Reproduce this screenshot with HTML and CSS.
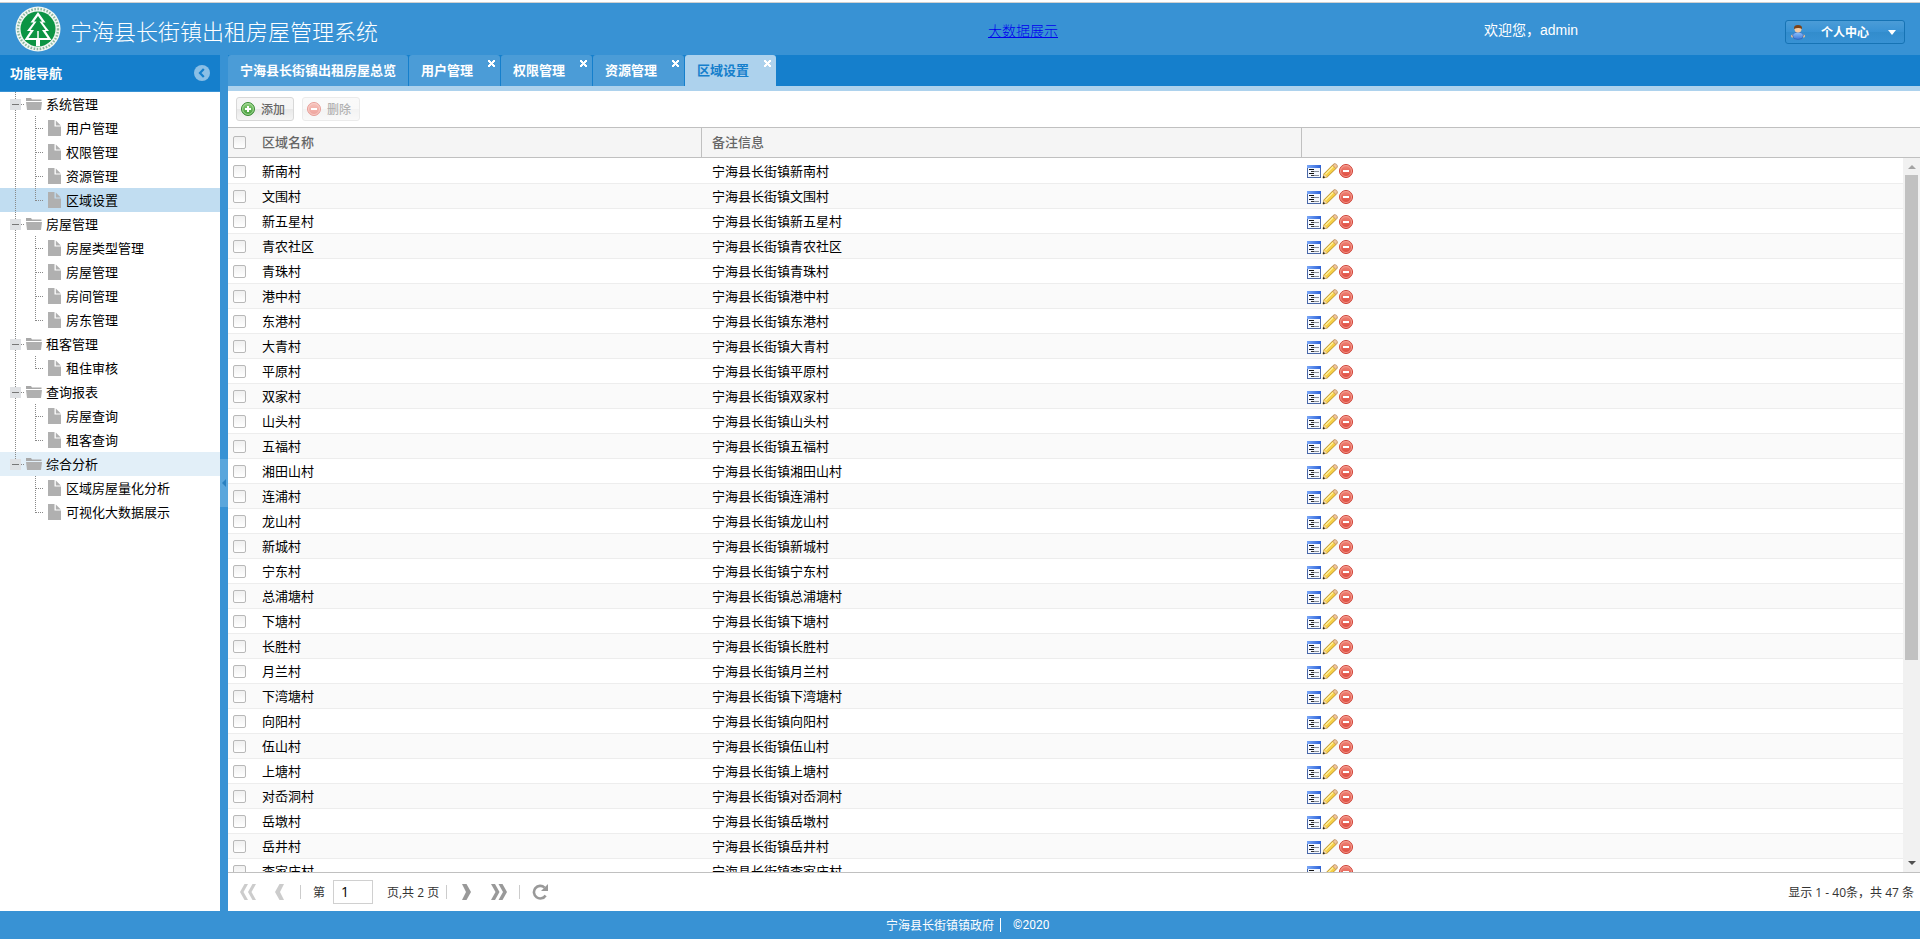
FILE: index.html
```
<!DOCTYPE html>
<html lang="zh-CN">
<head>
<meta charset="utf-8">
<title>宁海县长街镇出租房屋管理系统</title>
<link rel="stylesheet" href="styles.css">
</head>
<body>
<svg class="defs" width="0" height="0">
  <defs>
    <linearGradient id="gBlue" x1="0" y1="0" x2="1" y2="0"><stop offset="0" stop-color="#7ba8f8"/><stop offset="1" stop-color="#2c62d8"/></linearGradient>
    <linearGradient id="gRed" x1="0" y1="0" x2="0" y2="1"><stop offset="0" stop-color="#f08a7c"/><stop offset="1" stop-color="#dd4438"/></linearGradient>
    <linearGradient id="gGreen" x1="0" y1="0" x2="0" y2="1"><stop offset="0" stop-color="#8ccf7a"/><stop offset="1" stop-color="#3f9a36"/></linearGradient>
    <linearGradient id="gShirt" x1="0" y1="0" x2="0" y2="1"><stop offset="0" stop-color="#8fc4ff"/><stop offset="1" stop-color="#3b78d8"/></linearGradient>
    <symbol id="form" viewBox="0 0 16 16">
      <rect x="1.5" y="2.500" width="13" height="12" fill="#f4f8ff" stroke="#4a68a8"/>
      <rect x="1" y="2" width="14" height="3" fill="url(#gBlue)"/>
      <path d="M3 6.500h5M3 10.500h5" stroke="#111"/><path d="M8 8.500h5M5 12.500h8M9 6.500h0" stroke="#8a8f98"/><path d="M5 8.500h3M5 12.500h3" stroke="#333"/>
    </symbol>
    <symbol id="pencil" viewBox="0 0 16 16">
      <path d="M1 15l1-4.2L11 1.7q1.2-1.2 2.6 0l.8.8q1.2 1.3 0 2.6L5.2 14z" fill="#f6cf45" stroke="#b98a1d" stroke-width=".9"/>
      <path d="M3.5 11.2l7.8-7.8" stroke="#fff0a0" stroke-width="1.3"/>
      <path d="M10.6 2.1L12 .9q1.3-.7 2.6.5t.4 2.9l-1.2 1.2z" fill="#f0c69a" stroke="#b98a5d" stroke-width=".7"/>
      <path d="M1 15l1-4 3 3z" fill="#f3d9b0"/><path d="M.8 15.2l.6-2.4 1.8 1.8z" fill="#222"/>
    </symbol>
    <symbol id="minus" viewBox="0 0 16 16">
      <circle cx="8" cy="8" r="6.500" fill="url(#gRed)" stroke="#cf4035"/><circle cx="8" cy="8" r="5.500" fill="none" stroke="#f5a79c" stroke-width=".8"/>
      <rect x="5" y="7" width="6" height="2" fill="#fff"/>
    </symbol>
    <symbol id="plus" viewBox="0 0 16 16">
      <circle cx="8" cy="8" r="6.500" fill="url(#gGreen)" stroke="#3a8a34"/><circle cx="8" cy="8" r="5.400" fill="none" stroke="#b5e2a8" stroke-width=".8"/>
      <path d="M8 5v6M5 8h6" stroke="#fff" stroke-width="2"/>
    </symbol>
    <symbol id="folder" viewBox="0 0 16 16"><path d="M0 2h5l1 1.500h9.500V5H0z" fill="#a8a8a8"/><path d="M0 6h16l-1 8H1z" fill="#b0b0b0"/></symbol>
    <symbol id="file" viewBox="0 0 16 16"><path d="M2 0h6.500v6.500H15V16H2z" fill="#b0b0b0"/><path d="M9.800.500l5 5h-5z" fill="#b0b0b0"/></symbol>
  </defs>
</svg>
<div class="app">
  <header class="top">
    <svg class="logo" viewBox="0 0 46 46">
      <circle cx="23" cy="23" r="22.500" fill="#f2f7f3"/>
      <circle cx="23" cy="23" r="20" fill="none" stroke="#8db8a0" stroke-width="2.400" stroke-dasharray="1.600 1.500"/>
      <circle cx="23" cy="23" r="17.500" fill="#0c9444"/>
      <path d="M23 6l-7.500 10.500h3L12 25h3.500L9.500 34H21v6h4v-6h11.500l-6-9H34l-6.500-8.500h3z" fill="#fff"/>
      <path d="M23 10l-4 5.500h2.500L15.500 24H19l-5.500 8h19L27 24h3.500l-6-8.500H27z" fill="#0c9444"/>
      <path d="M23 25v15" stroke="#fff" stroke-width="1.500"/>
    </svg>
    <h1 class="title">宁海县长街镇出租房屋管理系统</h1>
    <a class="bigdata" href="#">大数据展示</a>
    <span class="welcome">欢迎您，admin</span>
    <button class="user">
      <svg class="ico" viewBox="0 0 16 16"><circle cx="2.600" cy="12" r="1.600" fill="#f0c095"/><circle cx="13.400" cy="12" r="1.600" fill="#f0c095"/><path d="M2.500 11Q4 8 8 8t5.500 3l-1.500 3.500q-4 1.800-8 0z" fill="url(#gShirt)" stroke="#2f62b8" stroke-width=".7"/><circle cx="8" cy="5" r="3.500" fill="#f3cba4"/><path d="M4 5Q3.500 1 8 1t4 4Q10 3.800 8 4T4 5z" fill="#7a4218"/></svg>
      <b>个人中心</b><i class="caret"></i>
    </button>
  </header>
  <div class="main">
    <aside class="side">
      <div class="side-head"><b>功能导航</b>
        <svg width="16" height="16" viewBox="0 0 16 16"><circle cx="8" cy="8" r="8" fill="#8abfe6"/><path d="M9.800 4L6 8l3.800 4" fill="none" stroke="#157fcc" stroke-width="2.200"/></svg>
      </div>
      <ul class="tree" id="tree"></ul>
    </aside>
    <div class="split"><div class="handle"><i></i></div></div>
    <section class="content">
      <nav class="tabs">
        <div class="tab first">宁海县长街镇出租房屋总览</div>
        <div class="tab">用户管理<i class="x"></i></div>
        <div class="tab">权限管理<i class="x"></i></div>
        <div class="tab">资源管理<i class="x"></i></div>
        <div class="tab on">区域设置<i class="x"></i></div>
      </nav>
      <div class="tools">
        <button class="btn"><svg class="ico"><use href="#plus"/></svg><span>添加</span></button>
        <button class="btn off"><svg class="ico"><use href="#minus"/></svg><span>删除</span></button>
      </div>
      <div class="row head"><div class="c0"><i class="cb"></i></div><div class="c1">区域名称</div><div class="c2">备注信息</div><div class="c3"></div></div>
      <div class="body">
        <div class="rows" id="rows"></div>
        <div class="bar"><i class="up"></i><i class="thumb"></i><i class="down"></i></div>
      </div>
      <div class="pager">
        <svg class="pg first-pg" viewBox="0 0 16 16"><path d="M4.500 0H8L3.500 8 8 16H4.500L0 8zM12.500 0H16l-4.500 8L16 16h-3.500L8 8z"/></svg>
        <svg class="pg prev-pg" viewBox="0 0 16 16"><path d="M7.500 0H12L8 8l4 8H7.500L3 8z"/></svg>
        <i class="sep"></i><span class="di">第</span><span class="num">1</span><span class="total">页,共 2 页</span><i class="sep s2"></i>
        <svg class="pg dark next-pg" viewBox="0 0 16 16"><path d="M4 0h4.500L13 8l-4.500 8H4l4-8z"/></svg>
        <svg class="pg dark last-pg" viewBox="0 0 16 16"><path d="M0 0h4l4.500 8L4 16H0l4.500-8zM7.500 0h4L16 8l-4.500 8h-4L12 8z"/></svg>
        <i class="sep s3"></i>
        <svg class="pg dark re-pg" viewBox="0 0 16 16"><path d="M12.600 3.600A6.300 6.300 0 1 0 13.600 11.500" fill="none" stroke="#999" stroke-width="2.600"/><path d="M16 0v7H9z"/></svg>
        <span class="info">显示 1 - 40条，共 47 条</span>
      </div>
    </section>
  </div>
  <footer class="foot"><span>宁海县长街镇镇政府</span><i></i><span class="year">©2020</span></footer>
</div>
<script src="app.js"></script>
</body>
</html>
```
FILE: styles.css
```
* { box-sizing: border-box; }
html, body { margin: 0; height: 100%; overflow: hidden; }
body { font: 13px/17px "Open Sans", "Noto Sans CJK SC", sans-serif; color: #000; background: #fff; }
ul { list-style: none; margin: 0; padding: 0; }
button { font: inherit; }
i { display: block; font-style: normal; }
.defs { position: absolute; }
.app { height: 939px; display: flex; flex-direction: column; padding-top: 2px; }
.ico { width: 16px; height: 16px; display: block; flex: none; }

.top { height: 53px; flex: none; background: #3892d4; border-top: 1px solid #d0d0d0; display: flex; align-items: center; color: #fff; }
.logo { width: 46px; height: 46px; margin: 0 9px 0 15px; }
.title { font-size: 22px; font-weight: 300; line-height: 30px; margin: 4px 0 0; width: 918px; white-space: nowrap; }
.bigdata { color: #00e; font-size: 14px; font-weight: 300; width: 496px; margin-top: 2px; }
.welcome { font: 14px/17px "Liberation Sans", "Noto Sans CJK SC", sans-serif; width: 301px; white-space: nowrap; margin-top: 2px; }
.user { width: 120px; height: 24px; margin-top: 6px; padding: 0 8px 0 4px; border: 1px solid #1673b4; border-radius: 3px; background: linear-gradient(#4b9cd7, #3892d4 50%, #328ccc 50%, #3892d4); display: flex; align-items: center; color: #fff; font-size: 12px; }
.user b { margin: 0 auto 0 15px; }
.caret { border: 4px solid transparent; border-top: 5px solid #fff; border-bottom: 0; }

.main { height: 856px; flex: none; display: flex; }
.side { width: 220px; background: #fff; }
.side-head { height: 37px; background: #157fcc; border-bottom: 1px solid #3892d4; color: #fff; display: flex; align-items: center; justify-content: space-between; padding: 0 10px; }
.node { height: 24px; display: flex; align-items: center; white-space: nowrap; }
.node .txt { margin-left: 4px; }
.node.sel { background: #c1ddf1; }
.node.hover { background: #e2eff8; }
.lead { width: 26px; height: 24px; flex: none; }
.lead.kid { width: 46px; }

.split { width: 8px; background: #3892d4; display: flex; align-items: center; }
.handle { width: 8px; height: 48px; background: #5aa6dc; display: flex; align-items: center; justify-content: center; }
.handle i { border: 4px solid transparent; border-right: 4px solid #2a80c0; border-left: 0; }

.content { flex: 1; min-width: 0; display: flex; flex-direction: column; background: #fff; }
.tabs { height: 36px; flex: none; background: #157fcc; border-bottom: 5px solid #add2ed; display: flex; gap: 1px; }
.tab { position: relative; width: 91px; height: 31px; padding: 7px 0 0 12px; background: #4b9cd7; color: #fff; font-weight: bold; white-space: nowrap; border-radius: 3px 3px 0 0; }
.tab.first { width: 180px; }
.tab.on { background: #add2ed; color: #157fcc; }
.x { position: absolute; right: 5px; top: 5px; width: 7px; height: 7px; background: linear-gradient(45deg, transparent 42%, #fff 42% 58%, transparent 58%), linear-gradient(-45deg, transparent 42%, #fff 42% 58%, transparent 58%); }
.tools { height: 36px; flex: none; display: flex; gap: 8px; padding: 6px 8px; }
.btn { width: 58px; height: 24px; padding: 0 0 0 3px; border: 1px solid #d8d8d8; border-radius: 3px; background: linear-gradient(#f6f6f6, #f5f5f5 50%, #e8e8e8 50%, #f5f5f5); color: #666; display: flex; align-items: center; gap: 5px; font-size: 12px; font-weight: 500; }
.btn.off { opacity: .5; }
.row { display: flex; height: 25px; align-items: center; border-bottom: 1px solid #ededed; white-space: nowrap; }
.rows .row { padding-top: 1px; }
.row:nth-child(even) { background: #fafafa; }
.row.head { height: 31px; flex: none; background: #f5f5f5; border-top: 1px solid #c0c0c0; border-bottom: 1px solid #c0c0c0; color: #666; font-weight: 500; }
.head .c1, .head .c2 { height: 29px; line-height: 29px; border-right: 1px solid #c0c0c0; }
.c0 { width: 24px; padding-left: 5px; }
.c1 { width: 450px; padding-left: 10px; }
.c2 { width: 600px; padding-left: 10px; }
.c3 { display: flex; padding-left: 4px; }
.cb { width: 13px; height: 13px; border: 1px solid #b8b8b8; border-radius: 2px; background: linear-gradient(#f0f0f0, #fff); }
.body { height: 714px; display: flex; overflow: hidden; }
.rows { width: 1675px; }
.rows .row:first-child { height: 26px; }
.bar { width: 17px; background: #f1f1f1; display: flex; flex-direction: column; align-items: center; }
.up { margin-top: 7px; border: 4px solid transparent; border-bottom: 4px solid #a3a3a3; border-top: 0; }
.thumb { width: 13px; height: 485px; margin-top: 6px; background: #c1c1c1; }
.down { margin-top: 201px; border: 4px solid transparent; border-top: 4px solid #505050; border-bottom: 0; }

.pager { height: 39px; flex: none; border-top: 1px solid #c0c0c0; display: flex; align-items: center; color: #333; padding-right: 6px; }
.pg { width: 16px; height: 16px; fill: #ccc; flex: none; }
.pg.dark { fill: #999; }
.first-pg { margin-left: 12px; }
.prev-pg { margin-left: 16px; }
.sep { width: 1px; height: 14px; background: #ccc; margin-left: 12px; }
.di { margin-left: 12px; font-size: 12px; }
.num { width: 40px; height: 24px; border: 1px solid #d0d0d0; margin-left: 8px; padding-left: 7px; font-size: 14px; line-height: 22px; color: #000; }
.total { margin-left: 14px; width: 54px; font-size: 12px; white-space: nowrap; }
.s2 { margin-left: 5px; }
.next-pg { margin-left: 11px; }
.last-pg { margin-left: 17px; }
.s3 { margin-left: 12px; }
.re-pg { margin-left: 12px; }
.info { margin-left: auto; font-size: 12px; white-space: nowrap; }
.foot { height: 28px; flex: none; background: #3892d4; color: #fff; font-size: 12px; display: flex; align-items: center; padding-left: 886px; }
.foot i { width: 1px; height: 14px; background: #fff; margin: 0 12px 0 6px; }
.year { font-family: Roboto, sans-serif; }
```
FILE: app.js
```
const tree = [
  ['系统管理', ['用户管理', '权限管理', '资源管理', '区域设置']],
  ['房屋管理', ['房屋类型管理', '房屋管理', '房间管理', '房东管理']],
  ['租客管理', ['租住审核']],
  ['查询报表', ['房屋查询', '租客查询']],
  ['综合分析', ['区域房屋量化分析', '可视化大数据展示']]
];
const dash = 'stroke="#888" stroke-dasharray="1 1"';
let html = '';
tree.forEach(([name, kids], g) => {
  const last = g === tree.length - 1;
  html += `<li class="node${last ? ' hover' : ''}"><svg class="lead" viewBox="0 0 26 24"><path d="M15.500 0V${last ? 12 : 24}M21 12.500h4" ${dash}/><rect x="10" y="7" width="11" height="11" fill="#dfe1e4"/><path d="M12 12.500h7" stroke="#777"/></svg><svg class="ico"><use href="#folder"/></svg><span class="txt">${name}</span></li>`;
  kids.forEach((kid, k) => {
    const end = k === kids.length - 1;
    html += `<li class="node${kid === '区域设置' ? ' sel' : ''}"><svg class="lead kid" viewBox="0 0 46 24"><path d="${last ? '' : 'M15.500 0V24'}M35.500 0V${end ? 13 : 24}M36 12.500h8" ${dash}/></svg><svg class="ico"><use href="#file"/></svg><span class="txt">${kid}</span></li>`;
  });
});
document.getElementById('tree').innerHTML = html;

const villages = '新南村 文围村 新五星村 青农社区 青珠村 港中村 东港村 大青村 平原村 双家村 山头村 五福村 湘田山村 连浦村 龙山村 新城村 宁东村 总浦塘村 下塘村 长胜村 月兰村 下湾塘村 向阳村 伍山村 上塘村 对岙洞村 岳墩村 岳井村 李家庄村'.split(' ');
document.getElementById('rows').innerHTML = villages.map(v =>
  `<div class="row"><div class="c0"><i class="cb"></i></div><div class="c1">${v}</div><div class="c2">宁海县长街镇${v}</div><div class="c3"><svg class="ico"><use href="#form"/></svg><svg class="ico"><use href="#pencil"/></svg><svg class="ico"><use href="#minus"/></svg></div></div>`).join('');
```
